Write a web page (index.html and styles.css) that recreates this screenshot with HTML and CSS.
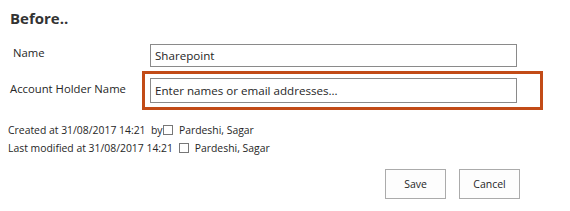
FILE: index.html
```html
<!DOCTYPE html>
<html lang="en">
<head>
    <meta charset="UTF-8">
    <title>Before..</title>
    <link rel="stylesheet" href="styles.css">
</head>
<body>
    <div class="page">
        <h1>Before..</h1>

        <div class="form-row name-row">
            <label class="field-label" for="name">Name</label>
            <input type="text" id="name" class="text-input" value="Sharepoint">
        </div>

        <div class="form-row holder-row">
            <label class="field-label" for="holder">Account Holder Name</label>
            <div class="highlight">
                <input type="text" id="holder" class="text-input people-input" placeholder="Enter names or email addresses...">
            </div>
        </div>

        <div class="meta">
            <div>Created at 31/08/2017 14:21&nbsp; by<span class="presence"></span>&nbsp; Pardeshi, Sagar</div>
            <div>Last modified at 31/08/2017 14:21&nbsp; <span class="presence"></span>&nbsp; Pardeshi, Sagar</div>
        </div>

        <div class="actions">
            <button>Save</button>
            <button>Cancel</button>
        </div>
    </div>
</body>
</html>
```

FILE: styles.css
```css
body {
    margin: 0;
    font-family: 'Open Sans', 'Noto Sans', sans-serif;
    color: #262626;
    background: #fff;
}

.page {
    width: 570px;
    height: 211px;
    padding: 7px 0 0 10px;
    box-sizing: border-box;
}

h1 {
    margin: 0 0 15px 0;
    font-size: 15px;
    font-weight: 700;
    color: #333;
    line-height: 22px;
}

.form-row {
    display: flex;
    align-items: center;
}

.field-label {
    width: 140px;
    font-size: 11.3px;
}

.name-row .field-label {
    padding-left: 3px;
    width: 137px;
    align-self: flex-start;
    margin-top: 1px;
}

.text-input {
    width: 367px;
    height: 23px;
    box-sizing: border-box;
    border: 1px solid #8a8a8a;
    padding: 0 4px;
    font-family: inherit;
    font-size: 11.6px;
    color: #262626;
    outline: none;
}

.people-input {
    height: 25px;
}

.people-input::placeholder {
    color: #262626;
    opacity: 1;
}

.holder-row {
    margin-top: 4px;
}

.holder-row .field-label {
    margin-top: -4px;
}

.highlight {
    margin-left: -8px;
    padding: 4px 23px 4px 5px;
    border: 3px solid #c24b17;
}

.meta {
    margin-top: 11px;
    margin-left: -2px;
    font-size: 10.4px;
    line-height: 18px;
}

.presence {
    display: inline-block;
    width: 8px;
    height: 8px;
    border: 1px solid #777;
    margin-left: 1px;
    vertical-align: -1px;
}

.actions {
    display: flex;
    justify-content: flex-end;
    gap: 13px;
    width: 510px;
    margin-top: 12px;
}

button {
    width: 61px;
    height: 30px;
    background: #fdfdfd;
    border: 1px solid #ababab;
    font-family: inherit;
    font-size: 10.5px;
    color: #262626;
    cursor: pointer;
}
```
